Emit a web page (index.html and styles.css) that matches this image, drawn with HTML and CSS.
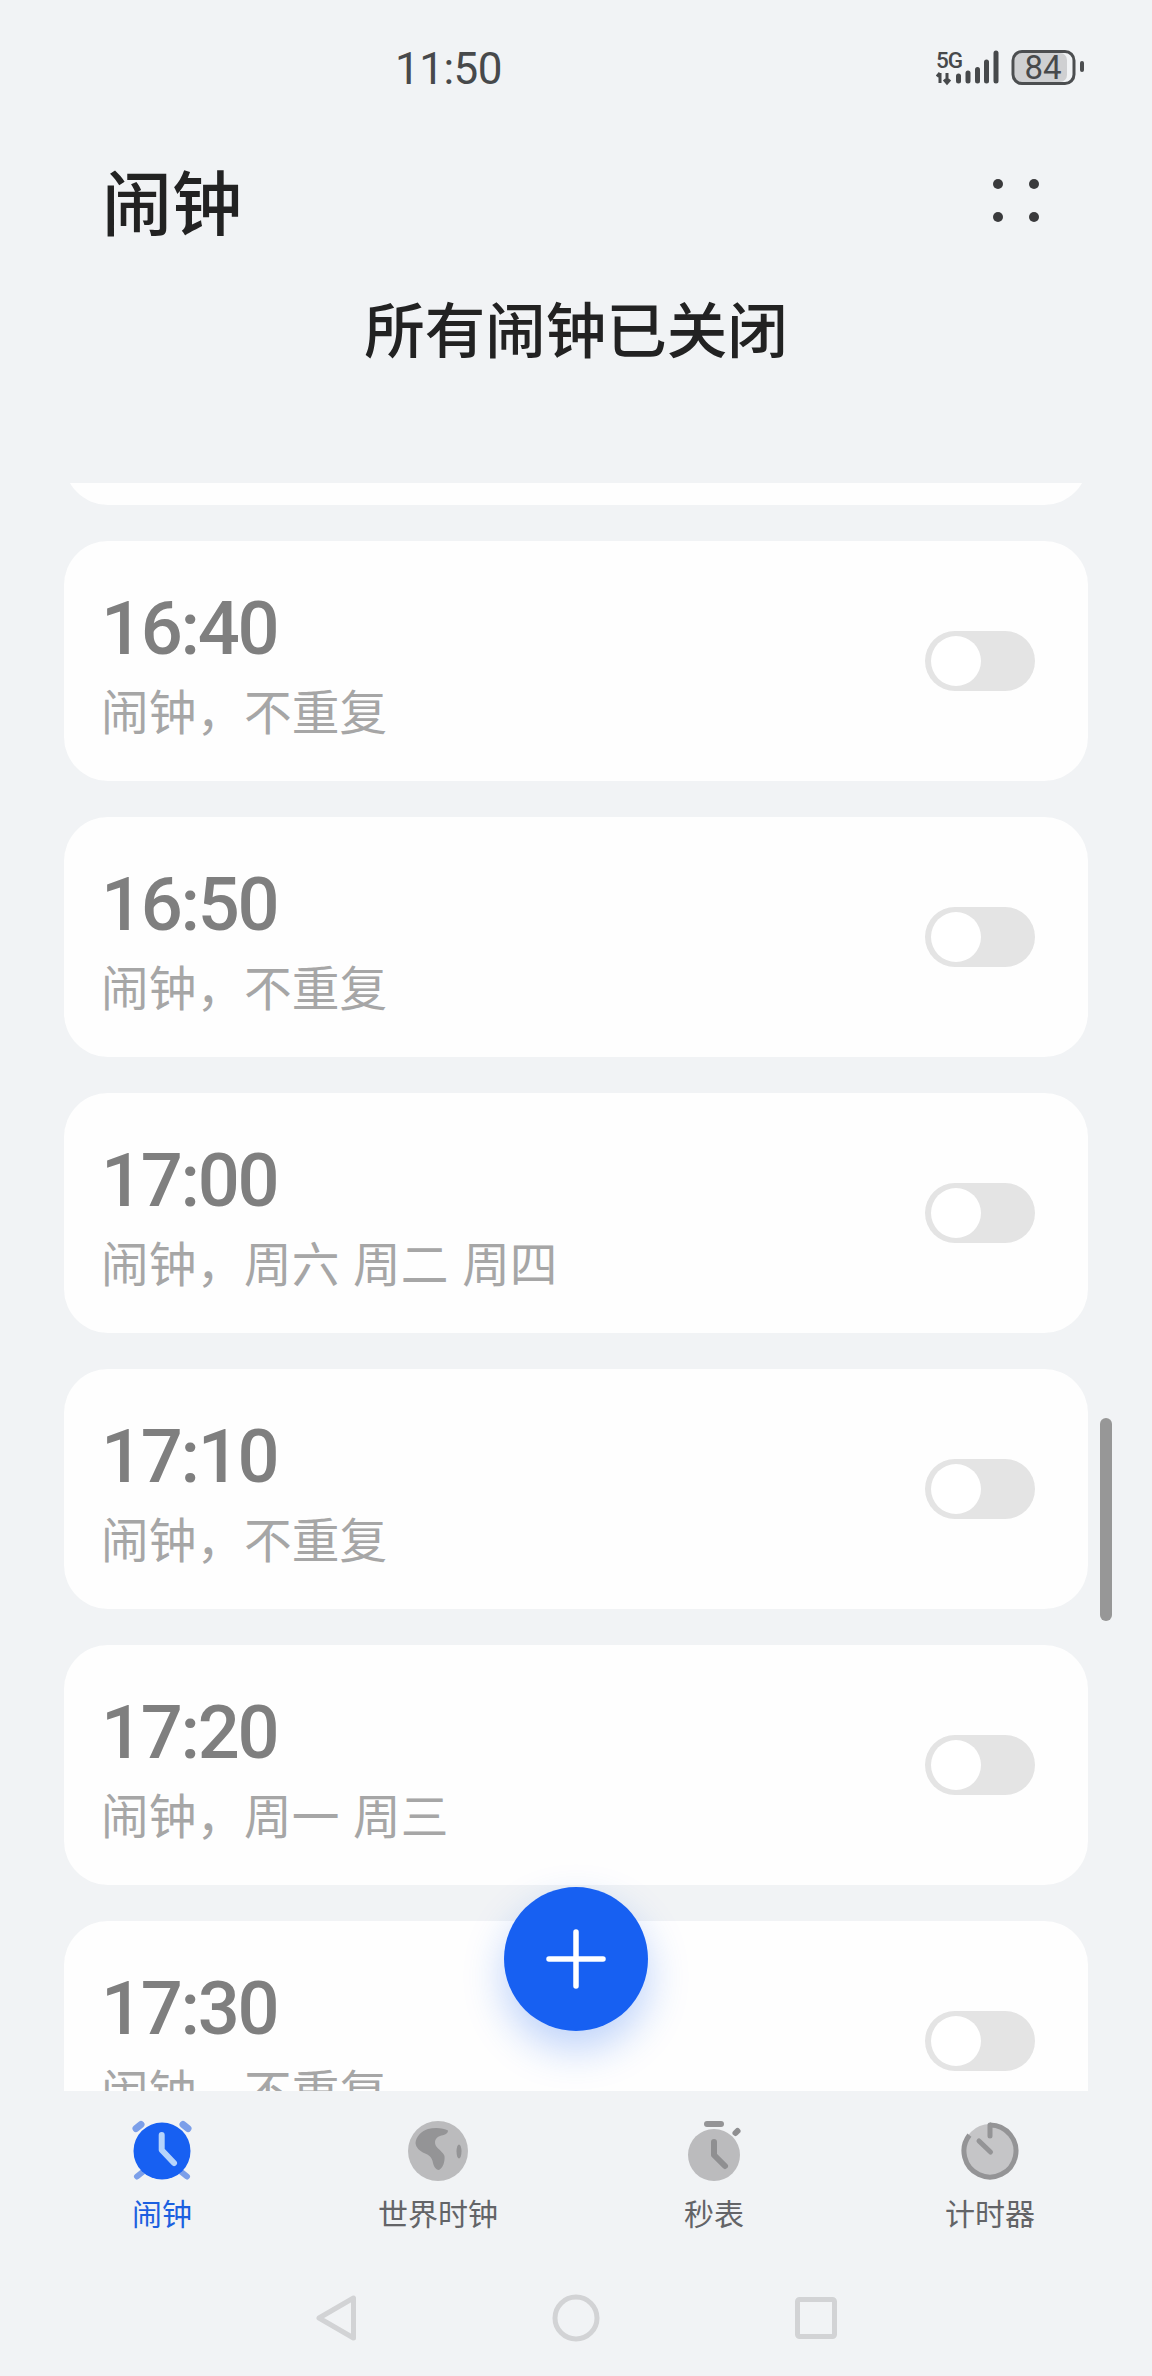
FILE: index.html
```html
<!DOCTYPE html>
<html lang="zh-CN">
<head>
<meta charset="utf-8">
<title>闹钟</title>
<link rel="stylesheet" href="styles.css">
</head>
<body>
<div class="screen">
  <header class="top">
    <div class="status">
      <span class="clock">11:50</span>
      <svg class="status-icons" width="150" height="46" viewBox="0 -6 150 46">
        <text class="net" x="0" y="20">5G</text>
        <g class="arrows"><path d="M4 35V25M1 28.500L4 25M11 25V35M8 31.500L11 35L14 31.500"/></g>
        <g class="bars">
          <path d="M22.500 28V33"/><path d="M32 25V33"/><path d="M41.500 21.500V33"/><path d="M50.500 14V33"/><path d="M60 5V33"/>
        </g>
        <rect class="batt-fill" x="78.500" y="5" width="52.500" height="29" rx="7"/>
        <rect class="batt-shell" x="77" y="3.500" width="61" height="32" rx="9"/>
        <text class="batt-num" x="107" y="31">84</text>
        <rect class="batt-tip" x="144" y="13" width="4" height="11" rx="2"/>
      </svg>
    </div>
    <div class="title-row">
      <h1 class="title">闹钟</h1>
      <div class="dots"><i></i><i></i><i></i><i></i></div>
    </div>
    <p class="summary">所有闹钟已关闭</p>
  </header>

  <main class="list-wrap">
    <div class="list">
      <article class="card"></article>
      <article class="card">
        <div class="info"><div class="time">16:40</div><div class="sub">闹钟，不重复</div></div>
        <span class="toggle"></span>
      </article>
      <article class="card">
        <div class="info"><div class="time">16:50</div><div class="sub">闹钟，不重复</div></div>
        <span class="toggle"></span>
      </article>
      <article class="card">
        <div class="info"><div class="time">17:00</div><div class="sub">闹钟，周六 周二 周四</div></div>
        <span class="toggle"></span>
      </article>
      <article class="card">
        <div class="info"><div class="time">17:10</div><div class="sub">闹钟，不重复</div></div>
        <span class="toggle"></span>
      </article>
      <article class="card">
        <div class="info"><div class="time">17:20</div><div class="sub">闹钟，周一 周三</div></div>
        <span class="toggle"></span>
      </article>
      <article class="card">
        <div class="info"><div class="time">17:30</div><div class="sub">闹钟，不重复</div></div>
        <span class="toggle"></span>
      </article>
    </div>
    <div class="scrollbar"></div>
  </main>

  <button class="fab" aria-label="添加闹钟">
    <svg width="72" height="72" viewBox="0 0 72 72"><path d="M9 36H63M36 9V63"/></svg>
  </button>

  <nav class="tabs">
    <div class="tab active">
      <svg class="tab-icon" width="72" height="72" viewBox="0 0 72 72">
        <g class="alarm-ears"><path d="M10 13.500L15 9.500M62 13.500L57 9.500"/></g>
        <g class="alarm-feet"><path d="M11 61.500L16 57.500M61 61.500L56 57.500"/></g>
        <circle class="alarm-face" cx="36" cy="36" r="28.500"/>
        <path class="alarm-hand" d="M35.700 20V35L48 48"/>
      </svg>
      <span class="tab-label">闹钟</span>
    </div>
    <div class="tab">
      <svg class="tab-icon" width="72" height="72" viewBox="0 0 72 72">
        <circle class="disc" cx="36" cy="36" r="30"/>
        <path class="land" d="M13.500 28C14 22 19 16 26 14C33 12 42 13 46 15.500C46 19 42 20 38 21C33 23 32 27 34 31C37 35 41 37 42.500 41C43 47 41 53 37 55C34 55 32 52 31 48C30 42 27 40 22 38C18 36 14 33 13.500 28Z"/>
        <ellipse class="land" cx="57" cy="36.500" rx="2.500" ry="7"/>
      </svg>
      <span class="tab-label">世界时钟</span>
    </div>
    <div class="tab">
      <svg class="tab-icon" width="72" height="72" viewBox="0 0 72 72">
        <circle class="disc" cx="36" cy="40" r="26"/>
        <rect class="watch-top" x="26" y="6" width="20" height="6" rx="3"/>
        <path class="watch-hand" d="M57.500 18L59.500 16"/>
        <path class="watch-hand" d="M36 27V40L47 51"/>
      </svg>
      <span class="tab-label">秒表</span>
    </div>
    <div class="tab">
      <svg class="tab-icon" width="72" height="72" viewBox="0 0 72 72">
        <circle class="timer-face" cx="36" cy="36" r="27"/>
        <path class="timer-ring" d="M36 10A26 26 0 1 1 15.400 20.100"/>
        <path class="timer-tick" d="M36 10V21M25 26L36.500 37"/>
      </svg>
      <span class="tab-label">计时器</span>
    </div>
  </nav>

  <div class="navbar">
    <svg width="48" height="48" viewBox="0 0 48 48"><path d="M7 24L41.500 4V44Z"/></svg>
    <svg width="48" height="48" viewBox="0 0 48 48"><circle cx="24" cy="24" r="21"/></svg>
    <svg width="48" height="48" viewBox="0 0 48 48"><rect x="5.500" y="5.500" width="37" height="37" rx="2"/></svg>
  </div>
</div>
</body>
</html>
```

FILE: styles.css
```css
* { box-sizing: border-box; }
html, body { margin: 0; padding: 0; }
body {
  width: 1152px;
  height: 2376px;
  background: #f1f3f5;
  font-family: "Noto Sans CJK SC", "Noto Sans", sans-serif;
  overflow: hidden;
}
.screen {
  position: relative;
  width: 1152px;
  height: 2376px;
  display: flex;
  flex-direction: column;
  background: #f1f3f5;
}

/* header */
.top { height: 483px; flex: none; }
.status {
  height: 90px;
  padding: 47px 0 0 395px;
  display: flex;
  justify-content: space-between;
  align-items: flex-start;
}
.clock {
  font-family: Roboto, sans-serif;
  font-size: 44px;
  line-height: 44px;
  letter-spacing: -.5px;
  color: #47494b;
}
.status-icons { margin: -5px 66px 0 0; flex: none; }
.net { font-family: Roboto, sans-serif; font-size: 22.500px; font-weight: 500; fill: #47494b; letter-spacing: -1px; }
.arrows path { fill: none; stroke: #47494b; stroke-width: 3; }
.bars path { fill: none; stroke: #47494b; stroke-width: 5; stroke-linecap: round; }
.batt-fill { fill: #cfd0d2; }
.batt-shell { fill: none; stroke: #4c4e50; stroke-width: 3; }
.batt-num { font-family: Roboto, sans-serif; font-size: 33px; fill: #47494b; text-anchor: middle; }
.batt-tip { fill: #4c4e50; }

.title-row {
  display: flex;
  justify-content: space-between;
  align-items: center;
  padding: 70px 113px 0 102px;
}
.title {
  margin: 0;
  font-size: 70px;
  line-height: 80px;
  font-weight: 500;
  color: #222;
}
.dots {
  display: grid;
  grid-template-columns: 10px 10px;
  gap: 23px 26px;
}
.dots i { width: 10px; height: 10px; border-radius: 50%; background: #3a3a3c; }
.summary {
  margin: 49px 0 0;
  text-align: center;
  font-size: 60.500px;
  line-height: 76px;
  font-weight: 500;
  color: #222;
}

/* list */
.list-wrap {
  flex: none;
  height: 1608px;
  position: relative;
  overflow: hidden;
}
.list {
  margin-top: -218px;
  padding: 0 64px;
  display: flex;
  flex-direction: column;
  gap: 36px;
}
.card {
  height: 240px;
  flex: none;
  background: #fefefe;
  border-radius: 44px;
  padding: 50px 53px 0 37px;
  display: flex;
  justify-content: space-between;
  align-items: flex-start;
}
.time {
  font-family: Roboto, sans-serif;
  font-size: 74px;
  line-height: 76px;
  font-weight: 500;
  letter-spacing: -2.300px;
  color: #7f7f7f;
}
.sub {
  font-size: 47.700px;
  line-height: 60px;
  margin-top: 13px;
  word-spacing: 3px;
  color: #a6a6a6;
}
.toggle {
  width: 110px;
  height: 60px;
  margin-top: 40px;
  border-radius: 30px;
  background: #e4e4e4;
  position: relative;
  flex: none;
}
.toggle::after {
  content: "";
  position: absolute;
  left: 6px;
  top: 5px;
  width: 50px;
  height: 50px;
  border-radius: 50%;
  background: #fff;
}
.scrollbar {
  position: absolute;
  left: 1100px;
  top: 935px;
  width: 12px;
  height: 203px;
  border-radius: 6px;
  background: #979797;
}

/* add button */
.fab {
  position: absolute;
  left: 504px;
  top: 1887px;
  width: 144px;
  height: 144px;
  padding: 0;
  border: 0;
  border-radius: 50%;
  background: #1760f2;
  box-shadow: 0 18px 40px rgba(23, 96, 242, .28);
  display: flex;
  align-items: center;
  justify-content: center;
}
.fab path { fill: none; stroke: #fff; stroke-width: 5.500; stroke-linecap: round; }

/* tabs */
.tabs {
  padding: 24px 24px 0;
  display: grid;
  grid-template-columns: repeat(4, 276px);
}
.tab {
  display: flex;
  flex-direction: column;
  align-items: center;
}
.tab-icon { display: block; }
.tab-label {
  margin-top: 5px;
  font-size: 30px;
  line-height: 40px;
  color: #636467;
}
.active .tab-label { color: #1c60e0; }
.alarm-ears path { fill: none; stroke: #7c9fe9; stroke-width: 7; stroke-linecap: round; }
.alarm-feet path { fill: none; stroke: #7c9fe9; stroke-width: 6; stroke-linecap: round; }
.alarm-face { fill: #1760f2; }
.alarm-hand { fill: none; stroke: #b6d4fb; stroke-width: 6; stroke-linecap: round; stroke-linejoin: round; }
.disc { fill: #bbbbbd; }
.land { fill: #949496; }
.watch-top { fill: #949496; }
.watch-hand { fill: none; stroke: #8f8f91; stroke-width: 6; stroke-linecap: round; stroke-linejoin: round; }
.timer-face { fill: #c5c5c7; }
.timer-ring { fill: none; stroke: #949496; stroke-width: 5; }
.timer-tick { fill: none; stroke: #949496; stroke-width: 5; stroke-linecap: round; }

/* system nav */
.navbar {
  margin-top: 62px;
  display: flex;
  justify-content: center;
  gap: 192px;
}
.navbar path, .navbar circle, .navbar rect {
  fill: none;
  stroke: #d2d3d5;
  stroke-width: 5;
  stroke-linejoin: round;
}
```
